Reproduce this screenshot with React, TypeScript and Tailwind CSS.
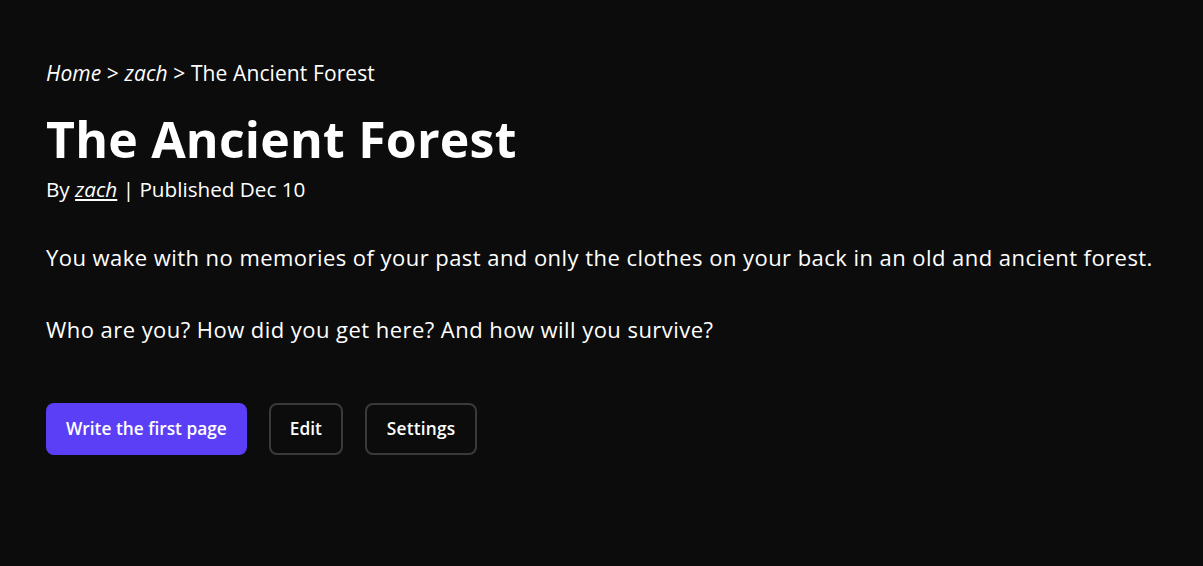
import React from 'react';

const App: React.FC = () => {
  return (
    <div className="min-h-screen bg-[#0c0c0c] text-white px-[46px] pt-[59px] font-['Open_Sans',sans-serif]">
      {/* Breadcrumbs */}
      <nav className="text-[21px] leading-[28px] tracking-[0.1px]">
        <a className="italic" href="#">Home</a>
        <span> &gt; </span>
        <a className="italic" href="#">zach</a>
        <span> &gt; The Ancient Forest</span>
      </nav>

      <h1 className="mt-[22px] text-[50px] leading-[60px] font-bold tracking-[0.2px]">The Ancient Forest</h1>
      <p className="mt-[6px] text-[20.7px] leading-[28px]">
        By <a className="italic underline" href="#">zach</a> | Published Dec 10
      </p>

      <div className="mt-[40px] text-[22px] leading-[28px] tracking-[0.45px] space-y-[44px]">
        <p>You wake with no memories of your past and only the clothes on your back in an old and ancient forest.</p>
        <p>Who are you? How did you get here? And how will you survive?</p>
      </div>

      <div className="mt-[60px] flex items-center gap-[22px]">
        <button className="h-[52px] px-[20px] rounded-[8px] bg-[#5b3ff6] text-[17.3px] font-semibold">
          Write the first page
        </button>
        <button className="h-[52px] px-[19px] rounded-[8px] border-2 border-[#3a3a3a] text-[17.3px] font-semibold">
          Edit
        </button>
        <button className="h-[52px] px-[20px] rounded-[8px] border-2 border-[#3a3a3a] text-[17.3px] font-semibold tracking-[0.2px]">
          Settings
        </button>
      </div>
    </div>
  );
};

export default App;
